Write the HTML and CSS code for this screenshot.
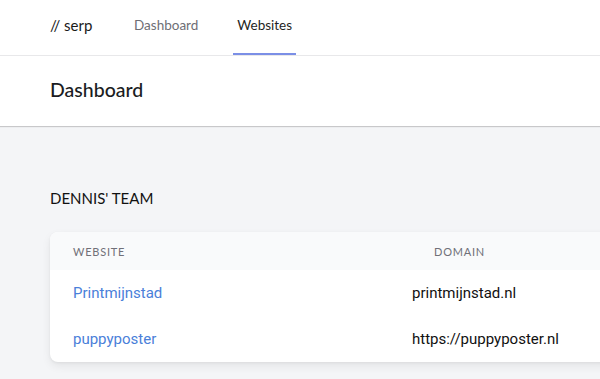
FILE: index.html
```html
<!DOCTYPE html>
<html>
<head>
<meta charset="utf-8">
<link rel="stylesheet" href="styles.css">
</head>
<body>
<nav class="topnav">
  <div class="logo">// serp</div>
  <div class="tabs">
    <a class="tab">Dashboard</a>
    <a class="tab active">Websites</a>
  </div>
</nav>
<header class="pagehead">
  <h1>Dashboard</h1>
</header>
<main class="main">
  <h2 class="team">DENNIS' TEAM</h2>
  <div class="card">
    <div class="row head">
      <div class="c1">Website</div>
      <div class="c2 hd">Domain</div>
    </div>
    <div class="row">
      <div class="c1"><a class="link">Printmijnstad</a></div>
      <div class="c2">printmijnstad.nl</div>
    </div>
    <div class="row">
      <div class="c1"><a class="link">puppyposter</a></div>
      <div class="c2">https://puppyposter.nl</div>
    </div>
  </div>
</main>
</body>
</html>
```
FILE: styles.css
```css
html, body { margin: 0; padding: 0; }
body {
  width: 600px;
  height: 379px;
  overflow: hidden;
  background: #f4f5f7;
  font-family: "Lato", "Noto Sans", sans-serif;
}
.topnav {
  height: 55px;
  background: #fff;
  border-bottom: 1px solid #e8e8ea;
  display: flex;
  align-items: stretch;
  padding-left: 50px;
}
.logo {
  display: flex;
  align-items: center;
  padding-bottom: 6px;
  font-size: 15px;
  color: #1a1a1a;
  width: 84px;
}
.tabs { display: flex; gap: 31px; }
.tab {
  display: flex;
  align-items: center;
  padding: 0 4px 4px;
  font-size: 13.5px;
  color: #6e6e75;
  border-bottom: 2px solid transparent;
}
.tab:first-child { padding-left: 0; }
.tab.active {
  color: #1f1f24;
  border-bottom-color: #7b8fe6;
}
.pagehead {
  height: 70px;
  background: #fff;
  box-shadow: 0 1px 1px rgba(0,0,0,0.18);
  display: flex;
  align-items: center;
  padding-left: 50px;
  position: relative;
}
.pagehead h1 {
  margin: 0 0 3px;
  font-size: 19.5px;
  font-weight: 500;
  color: #1a1c22;
}
.main { padding: 60px 0 0 50px; overflow: hidden; }
.team {
  margin: 0;
  font-size: 15px;
  font-weight: 400;
  color: #111;
  height: 24px;
  line-height: 24px;
}
.card {
  margin-top: 22px;
  margin-bottom: 20px;
  margin-right: -40px;
  background: #fff;
  border-radius: 8px;
  box-shadow: 0 4px 10px rgba(0,0,0,0.07), 0 1px 3px rgba(0,0,0,0.05);
  overflow: hidden;
}
.row {
  display: flex;
  align-items: center;
  height: 46px;
  font-family: "Roboto", sans-serif;
  font-size: 15px;
  color: #111;
}
.row.head {
  height: 38px;
  background: #f9fafb;
  font-family: "Lato", sans-serif;
  font-size: 11px;
  letter-spacing: 0.07em;
  text-transform: uppercase;
  color: #707078;
}
.c1 { width: 339px; padding-left: 23px; }
.c2 { flex: 1; }
.c2.hd { padding-left: 22px; }
.link { color: #4a80d9; text-decoration: none; }
```
